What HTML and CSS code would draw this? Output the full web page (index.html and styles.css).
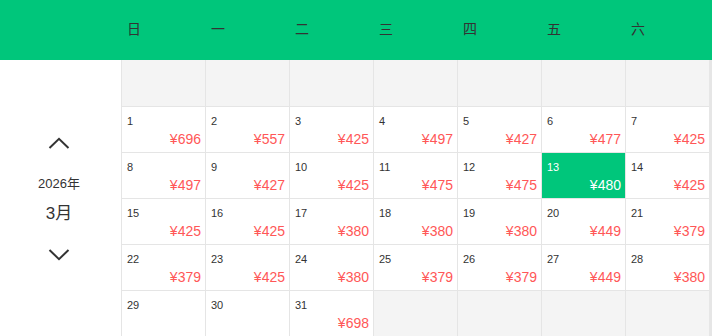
FILE: index.html
```html
<!DOCTYPE html>
<html lang="zh-CN">
<head>
<meta charset="utf-8">
<title>价格日历</title>
<link rel="stylesheet" href="styles.css">
</head>
<body>
<div class="cal">
  <div class="head">
    <div class="head-side"></div>
    <div class="weekdays">
      <div class="wd">日</div><div class="wd">一</div><div class="wd">二</div><div class="wd">三</div><div class="wd">四</div><div class="wd">五</div><div class="wd">六</div>
    </div>
  </div>
  <div class="main">
    <div class="side">
      <svg class="chev chev-up" width="22" height="12" viewBox="0 0 22 12"><polyline points="1.5,11 11,1.8 20.5,11" fill="none" stroke="#333" stroke-width="2"/></svg>
      <div class="year">2026年</div>
      <div class="month">3月</div>
      <svg class="chev chev-down" width="22" height="12" viewBox="0 0 22 12"><polyline points="1.5,1 11,10.2 20.5,1" fill="none" stroke="#333" stroke-width="2"/></svg>
    </div>
    <div class="grid">
      <div class="cell empty"></div><div class="cell empty"></div><div class="cell empty"></div><div class="cell empty"></div><div class="cell empty"></div><div class="cell empty"></div><div class="cell empty"></div>

      <div class="cell"><span class="d">1</span><span class="p">¥696</span></div>
      <div class="cell"><span class="d">2</span><span class="p">¥557</span></div>
      <div class="cell"><span class="d">3</span><span class="p">¥425</span></div>
      <div class="cell"><span class="d">4</span><span class="p">¥497</span></div>
      <div class="cell"><span class="d">5</span><span class="p">¥427</span></div>
      <div class="cell"><span class="d">6</span><span class="p">¥477</span></div>
      <div class="cell"><span class="d">7</span><span class="p">¥425</span></div>

      <div class="cell"><span class="d">8</span><span class="p">¥497</span></div>
      <div class="cell"><span class="d">9</span><span class="p">¥427</span></div>
      <div class="cell"><span class="d">10</span><span class="p">¥425</span></div>
      <div class="cell"><span class="d">11</span><span class="p">¥475</span></div>
      <div class="cell"><span class="d">12</span><span class="p">¥475</span></div>
      <div class="cell active"><span class="d">13</span><span class="p">¥480</span></div>
      <div class="cell"><span class="d">14</span><span class="p">¥425</span></div>

      <div class="cell"><span class="d">15</span><span class="p">¥425</span></div>
      <div class="cell"><span class="d">16</span><span class="p">¥425</span></div>
      <div class="cell"><span class="d">17</span><span class="p">¥380</span></div>
      <div class="cell"><span class="d">18</span><span class="p">¥380</span></div>
      <div class="cell"><span class="d">19</span><span class="p">¥380</span></div>
      <div class="cell"><span class="d">20</span><span class="p">¥449</span></div>
      <div class="cell"><span class="d">21</span><span class="p">¥379</span></div>

      <div class="cell"><span class="d">22</span><span class="p">¥379</span></div>
      <div class="cell"><span class="d">23</span><span class="p">¥425</span></div>
      <div class="cell"><span class="d">24</span><span class="p">¥380</span></div>
      <div class="cell"><span class="d">25</span><span class="p">¥379</span></div>
      <div class="cell"><span class="d">26</span><span class="p">¥379</span></div>
      <div class="cell"><span class="d">27</span><span class="p">¥449</span></div>
      <div class="cell"><span class="d">28</span><span class="p">¥380</span></div>

      <div class="cell"><span class="d">29</span></div>
      <div class="cell"><span class="d">30</span></div>
      <div class="cell"><span class="d">31</span><span class="p">¥698</span></div>
      <div class="cell empty"></div><div class="cell empty"></div><div class="cell empty"></div><div class="cell empty"></div>
    </div>
  </div>
</div>
</body>
</html>
```

FILE: styles.css
```css
* { box-sizing: border-box; }
html, body { margin: 0; padding: 0; }
body {
  width: 712px;
  height: 336px;
  overflow: hidden;
  background: #fff;
  font-family: "Liberation Sans", "Noto Sans CJK SC", sans-serif;
  color: #333;
}
.cal { width: 712px; }
.head {
  display: flex;
  height: 60px;
  background: #00c67b;
}
.head-side { width: 121px; flex: none; }
.weekdays { display: flex; }
.wd {
  width: 84px;
  padding: 18px 0 0 6px;
  font-family: "Noto Sans CJK SC", sans-serif;
  font-size: 14px;
  line-height: 20px;
  color: #333;
}
.main { display: flex; height: 277px; }
.side {
  width: 121px;
  flex: none;
  display: flex;
  flex-direction: column;
  align-items: center;
  justify-content: center;
  padding-right: 3px;
}
.chev { display: block; }
.year {
  margin-top: 26px;
  font-size: 13px;
  line-height: 18px;
}
.month {
  margin-top: 9px;
  font-size: 17px;
  line-height: 24px;
}
.chev-down { margin-top: 23px; }
.grid {
  display: grid;
  grid-template-columns: repeat(7, 84px);
  grid-template-rows: 47px repeat(5, 46px);
  border-right: 3px solid #e6e6e6;
}
.cell {
  display: flex;
  flex-direction: column;
  justify-content: space-between;
  border-left: 1px solid #e5e5e5;
  border-bottom: 1px solid #e5e5e5;
  padding: 8px 4px 5px 5px;
  background: #fff;
}
.cell.empty { background: #f4f4f4; }
.d {
  font-size: 11px;
  line-height: 13px;
  color: #333;
}
.p {
  align-self: flex-end;
  font-size: 14px;
  line-height: 16px;
  color: #ff5757;
}
.cell.active { background: #00c67b; }
.cell.active .d, .cell.active .p { color: #fff; }
```
